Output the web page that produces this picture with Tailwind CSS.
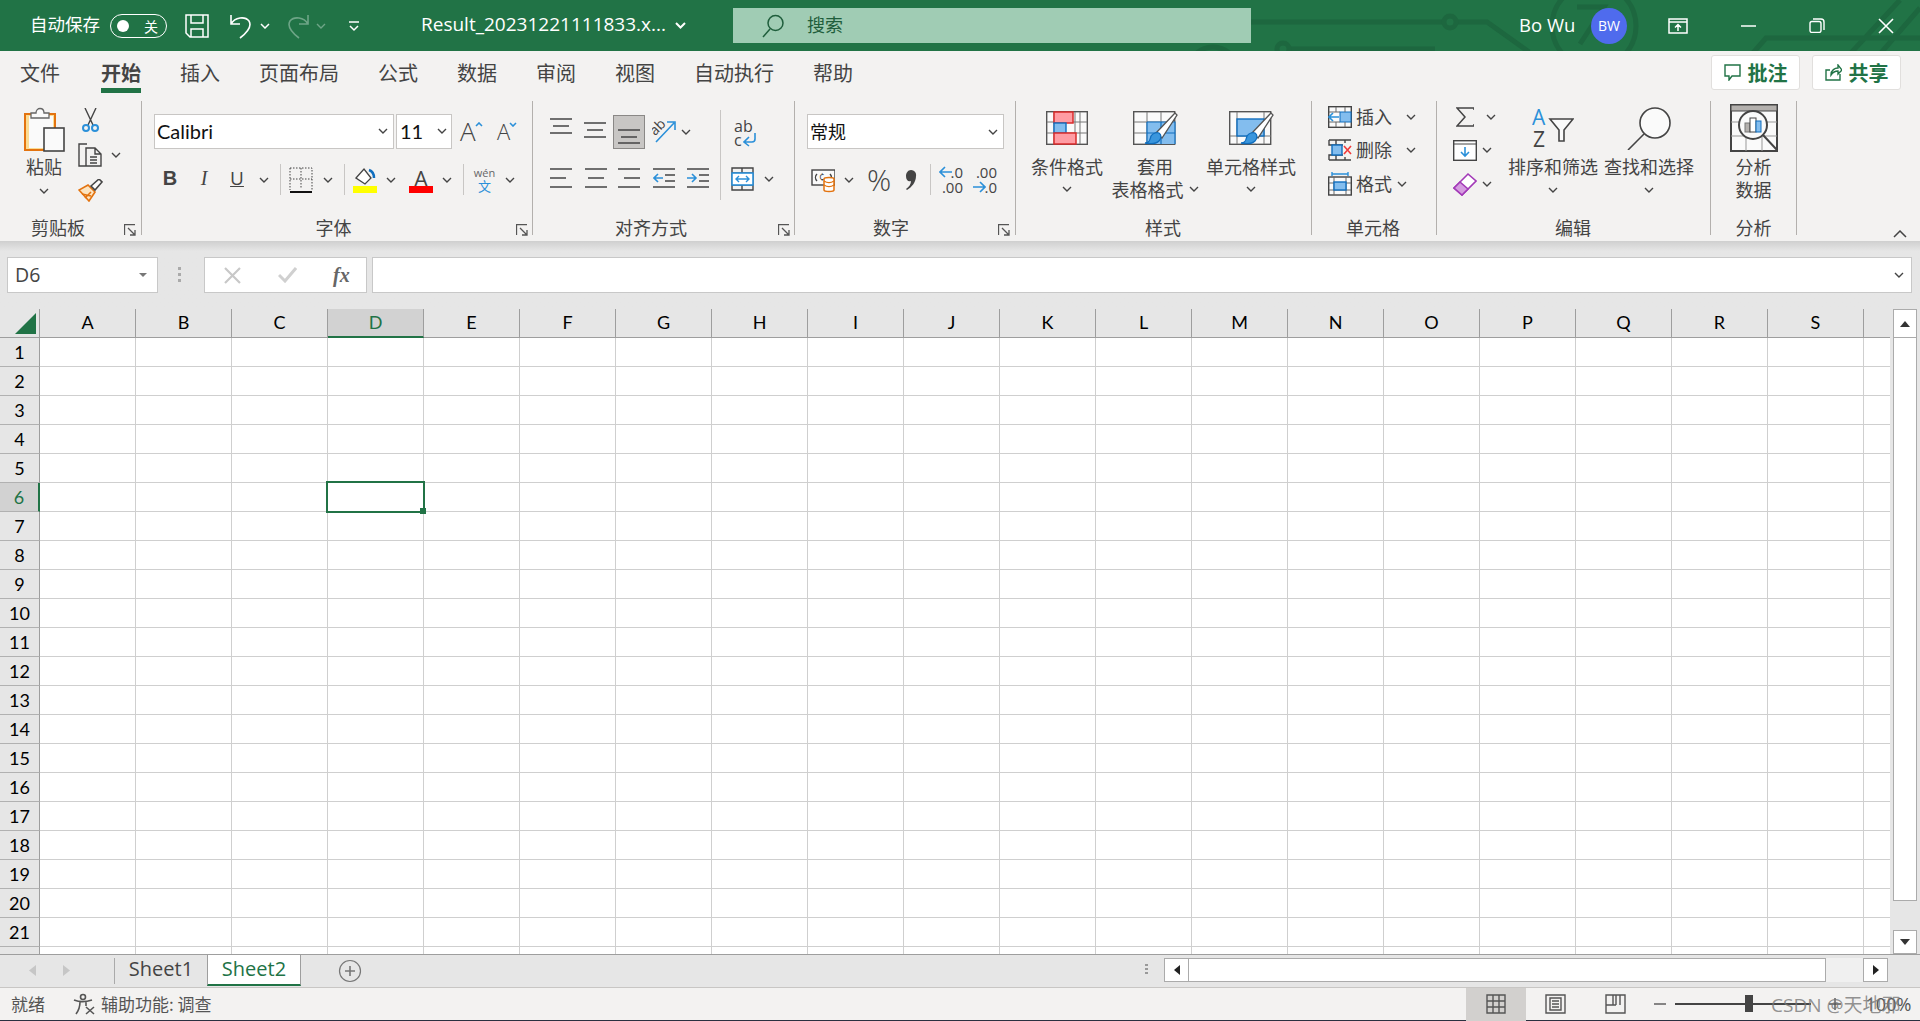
<!DOCTYPE html>
<html lang="zh-CN">
<head>
  <meta charset="UTF-8">
  <title>Excel</title>
  <script src="https://cdn.jsdelivr.net/npm/@tailwindcss/browser@4"></script>
</head>
<body class="relative w-[1920px] h-[1021px] overflow-hidden bg-[#e6e6e6] text-[#444] text-[18px] [font-family:'Noto_Sans_CJK_SC',sans-serif]">

  <svg class="hidden">
    <symbol id="chev" viewBox="0 0 10 6"><path d="M1 1l4 4 4-4" fill="none" stroke="#444" stroke-width="1.4"/></symbol>
    <symbol id="launcher" viewBox="0 0 12 12"><path d="M.5 11V.5H11M4 4l7 7M11 6v5H6" fill="none" stroke="#555" stroke-width="1.3"/></symbol>
    <symbol id="brush" viewBox="0 0 34 34"><path d="M12 22L31 2l2 2-15 23z" fill="#fff" stroke="#555" stroke-width="1.3"/><path d="M1 32c5 0 5-4 6-7 2-3 6-4 8-3 3 2 2 6 0 8-3 3-9 3-14 2z" fill="#3a96dd" stroke="#106ebe" stroke-width="1.3"/></symbol>
  </svg>

  <!-- title bar -->
  <header class="relative flex items-center h-[51px] bg-[#217346] text-white overflow-hidden">
    <svg class="absolute left-0 top-0" width="1920" height="51" fill="none" stroke="#1d673f" stroke-width="5">
      <path d="M1250 22h193M1457 22h30l42 30"/><circle cx="1450" cy="22" r="6"/>
      <circle cx="1594" cy="26" r="42"/><path d="M1577 7h27l-24 37"/>
      <circle cx="1213" cy="72" r="25"/><path d="M1289 49h146"/><circle cx="1283" cy="49" r="6"/>
      <path d="M1752 54l14-16h154M1850 54l50-54M1880 54l40-46"/>
    </svg>
    <span class="relative ml-[30px] w-[70px] pb-[2px] text-[17.5px] whitespace-nowrap">自动保存</span>
    <div class="relative ml-[10px] w-[57px] h-[24px] rounded-full border border-white flex items-center justify-between pl-[6px] pr-[8px]">
      <span class="w-[12px] h-[12px] rounded-full bg-white"></span>
      <span class="text-[14px] leading-none">关</span>
    </div>
    <svg class="relative ml-[18px]" width="24" height="24" fill="none" stroke="#fff" stroke-width="1.5"><path d="M1 1h22v22H5l-4-4zM6 1v8h12V1M6 23v-8h12v8"/></svg>
    <svg class="relative ml-[20px]" width="24" height="26" fill="none" stroke="#fff" stroke-width="1.6"><path d="M2 2v9h9M2 11c4-7 14-8 18-3 3 5 0 10-9 17"/></svg>
    <svg class="relative ml-[7px]" width="10" height="6"><path d="M1 1l4 4 4-4" fill="none" stroke="#fff" stroke-width="1.5"/></svg>
    <svg class="relative ml-[17px]" width="23" height="26" fill="none" stroke="#6ea587" stroke-width="1.6"><path d="M21 2v9h-9M21 11C17 4 7 3 3 8c-3 5 0 10 9 17"/></svg>
    <svg class="relative ml-[6px]" width="10" height="6"><path d="M1 1l4 4 4-4" fill="none" stroke="#6ea587" stroke-width="1.4"/></svg>
    <svg class="relative ml-[22px]" width="12" height="12" fill="none" stroke="#fff" stroke-width="1.5"><path d="M1 2h10M2 6l4 4 4-4"/></svg>
    <span class="relative ml-[61px] w-[244px] pb-[2px] whitespace-nowrap text-[19px] [font-family:'Open_Sans',sans-serif]">Result_20231221111833.x...</span>
    <svg class="relative ml-[10px]" width="11" height="7"><path d="M1 1l4.5 4.5L10 1" fill="none" stroke="#fff" stroke-width="2"/></svg>
    <div class="relative ml-[47px] w-[518px] h-[35px] bg-[#a0ccb4] flex items-center text-[#1f5e3c]">
      <svg class="ml-[29px]" width="22" height="24" fill="none" stroke="#1f5e3c" stroke-width="1.5"><circle cx="13.5" cy="9" r="7.5"/><path d="M8 15L1 23"/></svg>
      <span class="ml-[23px] pb-[2px]">搜索</span>
    </div>
    <span class="relative ml-[268px] w-[56px] pb-[2px] whitespace-nowrap text-[18.500px] [font-family:'Open_Sans',sans-serif]">Bo Wu</span>
    <span class="relative ml-[16px] w-[36px] h-[36px] rounded-full bg-[#4f6bed] flex items-center justify-center text-[14px] [font-family:'Open_Sans',sans-serif]">BW</span>
    <svg class="relative ml-[41px]" width="20" height="16" fill="none" stroke="#fff" stroke-width="1.5"><path d="M1 1h18v14H1zM1 4h18M10 13V7M7 9.5l3-3 3 3"/></svg>
    <svg class="relative ml-[53px]" width="15" height="2"><path d="M0 1h15" stroke="#fff" stroke-width="1.5"/></svg>
    <svg class="relative ml-[53px]" width="16" height="15" fill="none" stroke="#fff" stroke-width="1.4"><rect x="1" y="3.5" width="11" height="11" rx="2"/><path d="M4 1h8a3 3 0 0 1 3 3v8"/></svg>
    <svg class="relative ml-[53px]" width="16" height="16" stroke="#fff" stroke-width="1.6"><path d="M1 1l14 14M15 1L1 15"/></svg>
  </header>

  <!-- tabs -->
  <nav class="flex items-start h-[50px] pt-[8px] pl-[20px] gap-[39px] bg-[#f3f2f1] text-[20px] leading-[28px]">
    <span class="h-[34px]">文件</span>
    <span class="ml-[2px] h-[34px] font-bold border-b-[5px] border-[#217346]">开始</span>
    <span class="h-[34px]">插入</span>
    <span class="h-[34px]">页面布局</span>
    <span class="h-[34px]">公式</span>
    <span class="h-[34px]">数据</span>
    <span class="h-[34px]">审阅</span>
    <span class="h-[34px]">视图</span>
    <span class="h-[34px]">自动执行</span>
    <span class="h-[34px]">帮助</span>
    <div class="ml-auto flex gap-[12px] -mt-[4px] mr-[19px] font-bold text-[#217346]">
      <div class="w-[89px] h-[35px] bg-white border border-[#e1dfdd] rounded-[3px] flex items-center justify-center gap-[7px]">
        <svg width="17" height="17" fill="none" stroke="#217346" stroke-width="1.4"><path d="M1 1h15v11H8l-3 4v-4H1z"/></svg>批注
      </div>
      <div class="w-[89px] h-[35px] bg-white border border-[#e1dfdd] rounded-[3px] flex items-center justify-center gap-[7px]">
        <svg width="17" height="17" fill="none" stroke="#217346" stroke-width="1.4"><path d="M15 10v6H1V6h4M6 11c0-5 4-7 7-7V1l4 5-4 4V7c-3 0-5 1-7 4z"/></svg>共享
      </div>
    </div>
  </nav>

  <!-- ribbon -->
  <div class="relative flex h-[140px] pb-[6px] bg-[#f3f2f1]">

    <!-- clipboard -->
    <section class="relative flex flex-col w-[142px] h-[134px] border-r border-[#b3b0ad]">
      <div class="flex flex-1">
        <div class="flex flex-col items-center w-[78px] pl-[10px] pt-[6px]">
          <svg width="41" height="45"><rect x="1" y="7" width="30" height="36" fill="#fbdc94" stroke="#e3730f" stroke-width="2"/><rect x="5" y="9" width="24" height="32" fill="#fafafa"/><path d="M7 11V6h5c0-6 8-6 8 0h5v5z" fill="#fafafa" stroke="#666" stroke-width="1.3"/><rect x="20" y="21" width="20" height="23" fill="#fafafa" stroke="#444" stroke-width="1.6"/></svg>
          <span class="mt-[3px] leading-[22px]">粘贴</span>
          <svg class="mt-[11px]" width="10" height="6"><use href="#chev"/></svg>
        </div>
        <div class="flex flex-col">
          <svg class="ml-[4px] mt-[7px]" width="17" height="25" fill="none" stroke-width="1.4"><path d="M3 0l8 17M14 0L6 17" stroke="#444"/><circle cx="4" cy="20" r="3" stroke="#2b90d9" stroke-width="2"/><circle cx="13" cy="20" r="3" stroke="#2b90d9" stroke-width="2"/></svg>
          <div class="flex items-center mt-[10px]">
            <svg width="24" height="24" fill="none" stroke="#444" stroke-width="1.4"><path d="M9 23H1V1h8M8 5h9l6 6v12H8zM17 5v6h6M12 14h7M12 17h7M12 20h7"/></svg>
            <svg class="ml-[9px]" width="10" height="6"><use href="#chev"/></svg>
          </div>
          <svg class="mt-[12px]" width="25" height="23" fill="none" stroke-width="1.6"><path d="M1 11l10 11 6-9-7-7z" fill="#fce4c0" stroke="#e3730f"/><path d="M4 15l9 2M7 19l6-6" stroke="#e3730f"/><path d="M13 7l8-7 3 3-7 8z" fill="#fafafa" stroke="#444"/></svg>
        </div>
      </div>
      <div class="h-[22px] leading-[22px] -mb-[3px] pl-[31px]">剪贴板</div>
      <svg class="absolute left-[124px] top-[123px]" width="12" height="12"><use href="#launcher"/></svg>
    </section>

    <!-- font -->
    <section class="relative flex flex-col w-[391px] h-[134px] border-r border-[#b3b0ad]">
      <div class="flex items-center mt-[13px] pl-[12px] h-[35px]">
        <div class="flex items-center justify-between w-[240px] h-[35px] bg-white border border-[#c8c6c4] pl-[2px] pr-[5px] pb-[2px] text-[#111] text-[20px] [font-family:Lato,sans-serif]">Calibri<svg width="10" height="6"><use href="#chev"/></svg></div>
        <div class="flex items-center justify-between ml-[2px] w-[56px] h-[35px] bg-white border border-[#c8c6c4] pl-[3px] pr-[4px] pb-[2px] text-[#111] text-[20px] [font-family:Lato,sans-serif]">11<svg width="10" height="6"><use href="#chev"/></svg></div>
        <div class="relative ml-[8px] w-[23px] text-[26px] leading-[33px] [font-family:'Open_Sans',sans-serif] font-light">A<svg class="absolute right-0 top-[7px]" width="8" height="5"><path d="M1 4l3-3 3 3" fill="none" stroke="#2b90d9" stroke-width="1.6"/></svg></div>
        <div class="relative ml-[14px] w-[20px] text-[22px] leading-[33px] [font-family:'Open_Sans',sans-serif] font-light">A<svg class="absolute right-0 top-[7px]" width="8" height="5"><path d="M1 1l3 3 3-3" fill="none" stroke="#2b90d9" stroke-width="1.6"/></svg></div>
      </div>
      <div class="flex items-center mt-[15px] h-[31px]">
        <span class="ml-[16px] w-[24px] pb-[3px] text-center font-bold text-[20px] [font-family:'Liberation_Sans',sans-serif]">B</span>
        <span class="ml-[10px] w-[24px] pb-[3px] text-center italic text-[20px] [font-family:'Liberation_Serif',serif]">I</span>
        <span class="ml-[9px] w-[24px] pb-[3px] text-center underline text-[19px] [font-family:'Open_Sans',sans-serif]">U</span>
        <svg class="ml-[10px]" width="10" height="6"><use href="#chev"/></svg>
        <span class="ml-[11px] w-px h-[31px] bg-[#c8c6c4]"></span>
        <svg class="ml-[8px]" width="24" height="26" fill="none"><path d="M1 1h22v22M1 1v22M12 1v21M1 12h22" stroke="#444" stroke-dasharray="1.5 1.5"/><path d="M1 25h22" stroke="#111" stroke-width="2"/></svg>
        <svg class="ml-[10px]" width="10" height="6"><use href="#chev"/></svg>
        <span class="ml-[11px] w-px h-[31px] bg-[#c8c6c4]"></span>
        <svg class="ml-[8px]" width="24" height="26"><path d="M3 11l8-9 7 9-6 6z" fill="#fff" stroke="#444" stroke-width="1.3"/><path d="M16 3c3 1 5 4 5 8" fill="none" stroke="#106ebe" stroke-width="2.5"/><rect y="19" width="24" height="7" fill="#ffff00"/></svg>
        <svg class="ml-[9px]" width="10" height="6"><use href="#chev"/></svg>
        <div class="relative ml-[13px] w-[24px] h-[26px] text-center text-[22px] leading-[22px] [font-family:'Open_Sans',sans-serif]">A<span class="absolute left-0 bottom-0 w-[24px] h-[7px] bg-[#ff0000]"></span></div>
        <svg class="ml-[9px]" width="10" height="6"><use href="#chev"/></svg>
        <span class="ml-[11px] w-px h-[31px] bg-[#c8c6c4]"></span>
        <div class="ml-[10px] w-[21px] flex flex-col items-center [font-family:'Open_Sans',sans-serif]">
          <span class="text-[11px] leading-[12px] text-[#666]">wén</span>
          <span class="text-[13px] leading-[14px] text-[#2b90d9]">文</span>
        </div>
        <svg class="ml-[10px]" width="10" height="6"><use href="#chev"/></svg>
      </div>
      <div class="mt-auto h-[22px] leading-[22px] -mb-[3px] text-center pr-[7px]">字体</div>
      <svg class="absolute right-[4px] top-[123px]" width="12" height="12"><use href="#launcher"/></svg>
    </section>

    <!-- alignment -->
    <section class="relative flex flex-col w-[262px] h-[134px] border-r border-[#b3b0ad]">
      <div class="flex h-[99px]">
        <div class="w-[187px] pl-[17px] pt-[14px]">
          <div class="flex items-center h-[34px]">
            <svg width="22" height="34" stroke="#444" stroke-width="1.6"><path d="M0 4h22M3 11h16M0 18h22"/></svg>
            <svg class="ml-[12px]" width="22" height="34" stroke="#444" stroke-width="1.6"><path d="M0 8h22M3 15h16M0 22h22"/></svg>
            <div class="ml-[7px] w-[32px] h-[34px] bg-[#c8c6c4] border border-[#8a8886] flex justify-center">
              <svg width="22" height="32" stroke="#444" stroke-width="1.6"><path d="M0 14h22M3 21h16M0 27h22"/></svg>
            </div>
            <svg class="ml-[7px]" width="24" height="28" fill="none"><path d="M4 24L22 5M15 4h8v8" stroke="#2b90d9" stroke-width="1.6"/><text x="0" y="13" transform="rotate(-45 8 12)" font-size="14" fill="#444" font-family="Open Sans">ab</text></svg>
            <svg class="ml-[5px]" width="10" height="6"><use href="#chev"/></svg>
          </div>
          <div class="flex items-center mt-[11px] h-[36px]">
            <svg width="22" height="36" stroke="#444" stroke-width="1.6"><path d="M0 9h22M0 18h16M0 27h22"/></svg>
            <svg class="ml-[13px]" width="22" height="36" stroke="#444" stroke-width="1.6"><path d="M0 9h22M3 18h16M0 27h22"/></svg>
            <svg class="ml-[11px]" width="22" height="36" stroke="#444" stroke-width="1.6"><path d="M0 9h22M6 18h16M0 27h22"/></svg>
            <svg class="ml-[13px]" width="22" height="36" fill="none" stroke-width="1.6"><path d="M0 9h22M12 15h10M12 21h10M0 27h22" stroke="#444"/><path d="M10 18H1M5 14l-4 4 4 4" stroke="#2b90d9"/></svg>
            <svg class="ml-[12px]" width="22" height="36" fill="none" stroke-width="1.6"><path d="M0 9h22M12 15h10M12 21h10M0 27h22" stroke="#444"/><path d="M0 18h9M5 14l4 4-4 4" stroke="#2b90d9"/></svg>
          </div>
        </div>
        <span class="mt-[9px] w-px h-[90px] bg-[#c8c6c4]"></span>
        <div class="flex flex-col">
          <div class="relative ml-[13px] mt-[18px] w-[22px] h-[29px] text-[16px] leading-[14px] [font-family:'Open_Sans',sans-serif]">ab<br>c<svg class="absolute left-[9px] top-[14px]" width="13" height="14" fill="none" stroke="#2b90d9" stroke-width="1.6"><path d="M12 0v6a3 3 0 0 1-3 3H2M6 4L1 9l5 4"/></svg></div>
          <div class="flex items-center ml-[10px] mt-[19px]">
            <svg width="23" height="24" fill="none"><path d="M1 1h21v22H1zM1 1v5h21M1 23v-5h21M11 1v5M11 18v5" stroke="#444" stroke-width="1.4"/><rect x="1" y="6" width="21" height="12" fill="#fff" stroke="#2b90d9" stroke-width="1.6"/><path d="M5 12h13M8 9l-3 3 3 3M15 9l3 3-3 3" stroke="#2b90d9" stroke-width="1.4"/></svg>
            <svg class="ml-[10px]" width="10" height="6"><use href="#chev"/></svg>
          </div>
        </div>
      </div>
      <div class="mt-auto h-[22px] leading-[22px] -mb-[3px] pl-[82px]">对齐方式</div>
      <svg class="absolute right-[4px] top-[123px]" width="12" height="12"><use href="#launcher"/></svg>
    </section>

    <!-- number -->
    <section class="relative flex flex-col w-[221px] h-[134px] border-r border-[#b3b0ad]">
      <div class="flex items-center justify-between mt-[13px] ml-[12px] w-[197px] h-[35px] bg-white border border-[#c8c6c4] pl-[2px] pr-[5px] text-[#111]">常规<svg width="10" height="6"><use href="#chev"/></svg></div>
      <div class="flex items-center mt-[15px] h-[31px]">
        <svg class="ml-[16px]" width="24" height="26" fill="none"><rect x="1" y="3" width="23" height="15" fill="#fafafa" stroke="#444" stroke-width="1.4"/><path d="M6 7c-2 2-2 5 0 7M19 7c2 2 2 5 0 7" stroke="#444" stroke-width="1.4"/><text x="8" y="14" font-size="10" fill="#444" font-family="Open Sans">¢</text><path d="M13 12c0-2 10-2 10 0v11c0 2-10 2-10 0z" fill="#fff" stroke="#e3730f" stroke-width="1.5"/><path d="M13 14c3 2 7 2 10 0M13 18c3 2 7 2 10 0" fill="none" stroke="#e3730f" stroke-width="1.3"/></svg>
        <svg class="ml-[9px]" width="10" height="6"><use href="#chev"/></svg>
        <span class="ml-[13px] w-[24px] text-center text-[30px] leading-[31px] [font-family:'Open_Sans',sans-serif] font-light">%</span>
        <svg class="ml-[14px]" width="12" height="22"><path d="M6 1a5 5 0 0 1 5 6c0 6-4 11-9 14l-1-1c3-2 5-5 5-8-3 1-5-1-5-5 0-3 2-6 5-6z" fill="#444"/></svg>
        <span class="ml-[13px] w-px h-[31px] bg-[#c8c6c4]"></span>
        <div class="relative ml-[8px] w-[24px] h-[29px] text-[15px] leading-[14px] [font-family:'Open_Sans',sans-serif]"><span class="absolute right-0 top-0">.0</span><span class="absolute right-0 bottom-0">.00</span><svg class="absolute left-0 top-[1px]" width="13" height="12" fill="none" stroke="#2b90d9" stroke-width="1.6"><path d="M13 6H2M6 1L1 6l5 5"/></svg></div>
        <div class="relative ml-[10px] w-[24px] h-[29px] text-[15px] leading-[14px] [font-family:'Open_Sans',sans-serif]"><span class="absolute right-0 top-0">.00</span><span class="absolute right-0 bottom-0">.0</span><svg class="absolute left-0 bottom-[1px]" width="13" height="12" fill="none" stroke="#2b90d9" stroke-width="1.6"><path d="M0 6h11M7 1l5 5-5 5"/></svg></div>
      </div>
      <div class="mt-auto h-[22px] leading-[22px] -mb-[3px] pl-[78px]">数字</div>
      <svg class="absolute right-[5px] top-[123px]" width="12" height="12"><use href="#launcher"/></svg>
    </section>

    <!-- styles -->
    <section class="relative flex flex-col w-[296px] h-[134px] border-r border-[#b3b0ad]">
      <div class="flex pl-[4px] h-[100px] leading-[22px]">
        <div class="flex flex-col items-center w-[94px] pt-[10px]">
          <svg width="42" height="34"><rect x=".7" y=".7" width="40.6" height="32.6" fill="#fafafa" stroke="#555" stroke-width="1.4"/><path d="M1 11h40M1 22h40M8 1v32M29 1v32M34 1v32" stroke="#777"/><rect x="8" y="1" width="19" height="11" fill="#ff9ca3" stroke="#d92b2b" stroke-width="1.5"/><rect x="8" y="12" width="12" height="10" fill="#83bdee" stroke="#106ebe" stroke-width="1.4"/><rect x="8" y="22" width="22" height="11" fill="#ff9ca3" stroke="#d92b2b" stroke-width="1.5"/></svg>
          <span class="mt-[10px] whitespace-nowrap">条件格式</span>
          <span class="mt-[1px] h-[22px] flex items-center"><svg width="10" height="6"><use href="#chev"/></svg></span>
        </div>
        <div class="flex flex-col items-center w-[82px] pt-[10px]">
          <svg width="44" height="34" class="overflow-visible"><rect x=".7" y=".7" width="41" height="32.6" fill="#fafafa" stroke="#555" stroke-width="1.4"/><path d="M1 11h41M1 22h41M14 1v32M28 1v32" stroke="#777"/><path d="M14 11h28v22H14z" fill="#83bdee"/><path d="M14 11h28v22M14 11v22M14 22h28M28 11v22" stroke="#106ebe" stroke-width="1.2" fill="none"/><use href="#brush" x="11" y="0" width="34" height="34"/></svg>
          <span class="mt-[10px] whitespace-nowrap">套用</span>
          <span class="mt-[1px] flex items-center whitespace-nowrap">表格格式<svg class="ml-[5px]" width="10" height="6"><use href="#chev"/></svg></span>
        </div>
        <div class="flex flex-col items-center w-[110px] pt-[10px]">
          <svg class="ml-[2px] overflow-visible" width="46" height="34"><rect x=".7" y=".7" width="41" height="32.6" fill="#fafafa" stroke="#555" stroke-width="1.4"/><path d="M1 25h41M8 1v32M35 1v32" stroke="#777"/><rect x="8" y="8" width="27" height="17" fill="#83bdee" stroke="#106ebe" stroke-width="1.4"/><use href="#brush" x="11" y="0" width="34" height="34"/></svg>
          <span class="mt-[10px] whitespace-nowrap">单元格样式</span>
          <span class="mt-[1px] h-[22px] flex items-center"><svg width="10" height="6"><use href="#chev"/></svg></span>
        </div>
      </div>
      <div class="mt-auto h-[22px] leading-[22px] -mb-[3px] pl-[129px]">样式</div>
    </section>

    <!-- cells -->
    <section class="relative flex flex-col w-[125px] h-[134px] border-r border-[#b3b0ad] leading-[24px]">
      <div class="flex flex-col pl-[16px] pt-[4px] h-[100px]">
        <div class="flex items-center h-[24px]">
          <svg width="24" height="22" fill="none"><rect x=".7" y=".7" width="22.6" height="20.6" fill="#fafafa" stroke="#444" stroke-width="1.4"/><rect x="12" y="6" width="11" height="10" fill="#83bdee" stroke="#106ebe"/><path d="M1 6h11M1 16h11M8 1v5M8 16v5M17 1v5M17 16v5" stroke="#666"/><path d="M11 11H1M5 7l-4 4 4 4" stroke="#2b90d9" stroke-width="1.6"/></svg>
          <span class="ml-[4px] w-[36px] pb-[2px]">插入</span>
          <svg class="ml-[14px]" width="10" height="6"><use href="#chev"/></svg>
        </div>
        <div class="flex items-center h-[24px] mt-[9px]">
          <svg width="24" height="22" fill="none"><path d="M1 1h22M1 21h22M1 1v5h14M1 21v-5h14M8 1v5M8 16v5M17 1v3M17 18v3" stroke="#444" stroke-width="1.4"/><rect x="4" y="6" width="10" height="10" fill="#83bdee" stroke="#106ebe" stroke-width="1.4"/><path d="M16 7l7 8M23 7l-7 8" stroke="#f03a3a" stroke-width="1.6"/></svg>
          <span class="ml-[4px] w-[36px] pb-[2px]">删除</span>
          <svg class="ml-[14px]" width="10" height="6"><use href="#chev"/></svg>
        </div>
        <div class="flex items-center h-[24px] mt-[10px]">
          <svg width="24" height="24" fill="none"><rect x=".7" y="5" width="22.6" height="18" fill="#fafafa" stroke="#444" stroke-width="1.4"/><path d="M1 11h22M1 18h22M6 5v18M18 5v18" stroke="#666"/><rect x="6" y="10" width="12" height="8" fill="#83bdee" stroke="#106ebe" stroke-width="1.4"/><path d="M4 2h16M4 0v4M20 0v4" stroke="#2b90d9" stroke-width="1.4"/></svg>
          <span class="ml-[4px] w-[36px] pb-[2px]">格式</span>
          <svg class="ml-[5px]" width="10" height="6"><use href="#chev"/></svg>
        </div>
      </div>
      <div class="mt-auto h-[22px] leading-[22px] -mb-[3px] pl-[34px]">单元格</div>
    </section>

    <!-- editing -->
    <section class="relative flex flex-col w-[274px] h-[134px] border-r border-[#b3b0ad]">
      <div class="flex h-[100px] leading-[22px]">
        <div class="flex flex-col w-[68px] pt-[4px]">
          <div class="flex items-center h-[24px] pl-[19px]">
            <svg width="18" height="20" fill="none" stroke="#444" stroke-width="1.5"><path d="M18 3V1H1l8 9-8 9h17v-2"/></svg>
            <svg class="ml-[12px]" width="10" height="6"><use href="#chev"/></svg>
          </div>
          <div class="flex items-center h-[24px] mt-[9px] pl-[16px]">
            <svg width="24" height="21" fill="none"><rect x=".7" y=".7" width="22.6" height="19.6" fill="#fff" stroke="#444" stroke-width="1.4"/><path d="M1 4h22" stroke="#444"/><path d="M12 7v9M8 12l4 4 4-4" stroke="#2b90d9" stroke-width="1.6"/></svg>
            <svg class="ml-[5px]" width="10" height="6"><use href="#chev"/></svg>
          </div>
          <div class="flex items-center h-[24px] mt-[10px] pl-[16px]">
            <svg width="24" height="24" fill="none" stroke="#a33ab8" stroke-width="1.6"><path d="M1 16L15 2l8 7-14 14z" fill="#fff"/><path d="M1 16l6-6 8 7-6 6z" fill="#d59ce0"/></svg>
            <svg class="ml-[5px]" width="10" height="6"><use href="#chev"/></svg>
          </div>
        </div>
        <div class="flex flex-col items-center w-[96px] pt-[7px]">
          <svg width="42" height="40"><text x="0" y="17" font-size="21" fill="#2b90d9" font-family="Open Sans">A</text><text x="1" y="39" font-size="21" fill="#444" font-family="Open Sans">Z</text><path d="M18 11h23l-9 11v11h-5V22z" fill="#fafafa" stroke="#444" stroke-width="1.6"/></svg>
          <span class="mt-[8px] whitespace-nowrap">排序和筛选</span>
          <span class="mt-[2px] h-[22px] flex items-center"><svg width="10" height="6"><use href="#chev"/></svg></span>
        </div>
        <div class="flex flex-col items-center w-[96px] pt-[6px]">
          <svg width="44" height="44" fill="none" stroke="#444" stroke-width="1.6"><circle cx="28" cy="16" r="15" fill="#fafafa"/><path d="M17 27L1 43"/></svg>
          <span class="mt-[5px] whitespace-nowrap">查找和选择</span>
          <span class="mt-[2px] h-[22px] flex items-center"><svg width="10" height="6"><use href="#chev"/></svg></span>
        </div>
      </div>
      <div class="mt-auto h-[22px] leading-[22px] -mb-[3px] pl-[118px]">编辑</div>
    </section>

    <!-- analysis -->
    <section class="relative flex flex-col items-center w-[86px] h-[134px] border-r border-[#b3b0ad] leading-[22px]">
      <svg class="mt-[3px]" width="48" height="48" fill="none"><rect x="1" y="1" width="46" height="46" fill="#fafafa" stroke="#444" stroke-width="2"/><rect x="1" y="1" width="46" height="6" fill="#b3b0ad" stroke="#444"/><path d="M1 18h46M1 32h46M16 32v15M32 32v15" stroke="#999"/><circle cx="23" cy="21" r="14" fill="#fafafa" stroke="#444" stroke-width="2"/><path d="M33 31l14 15" stroke="#444" stroke-width="2"/><rect x="15" y="19" width="5" height="9" fill="#b3b0ad" stroke="#777"/><rect x="20" y="14" width="6" height="14" fill="#fff" stroke="#444"/><rect x="26" y="17" width="5" height="11" fill="#83bdee" stroke="#106ebe"/></svg>
      <span class="mt-[3px]">分析</span>
      <span class="mt-[1px]">数据</span>
      <div class="mt-auto h-[22px] leading-[22px] -mb-[3px]">分析</div>
    </section>

    <svg class="absolute left-[1893px] top-[129px]" width="14" height="8"><path d="M1 7l6-6 6 6" fill="none" stroke="#444" stroke-width="1.5"/></svg>
  </div>

  <!-- formula bar -->
  <div class="flex items-start h-[68px] pt-[16px] pl-[7px] bg-gradient-to-b from-[#cfcfcf] to-[#e6e6e6] to-[10px] bg-no-repeat">
    <div class="flex items-center justify-between w-[151px] h-[36px] bg-white border border-[#c8c8c8] pl-[7px] pr-[10px] text-[19.500px] [font-family:'Open_Sans',sans-serif]">D6<svg width="8" height="4"><path d="M0 0h8L4 4z" fill="#777"/></svg></div>
    <div class="flex flex-col gap-[3px] mt-[10px] ml-[20px] w-[3px]"><span class="h-[3px] bg-[#aaa]"></span><span class="h-[3px] bg-[#aaa]"></span><span class="h-[3px] bg-[#aaa]"></span></div>
    <div class="relative flex items-center ml-[23px] w-[163px] h-[36px] bg-white border border-[#c8c8c8]">
      <svg class="ml-[19px]" width="17" height="17" stroke="#c8c8c8" stroke-width="2.2"><path d="M1 1l15 15M16 1L1 16"/></svg>
      <svg class="ml-[37px]" width="19" height="16" fill="none" stroke="#d0d0d0" stroke-width="3"><path d="M1 8l6 6L18 1"/></svg>
      <span class="ml-[36px] text-[20px] italic font-bold text-[#666] [font-family:'Liberation_Serif',serif]">fx</span>
    </div>
    <div class="flex items-center justify-end ml-[5px] w-[1540px] h-[36px] bg-white border border-[#c8c8c8] pr-[7px]"><svg width="10" height="6"><use href="#chev"/></svg></div>
  </div>

  <!-- sheet -->
  <div class="flex h-[645px]">
    <div id="sheet" class="relative w-[1890px] h-[645px] overflow-hidden bg-white [font-family:Lato,sans-serif] text-black">
      <div id="colHeader" class="flex h-[29px]">
        <div class="relative shrink-0 w-[40px] h-[29px] bg-[#e6e6e6] border-r border-b border-[#9e9e9e]">
          <svg class="absolute left-[15px] top-[4px]" width="21" height="21"><path d="M21 0v21H0z" fill="#217346"/></svg>
        </div>
      </div>
      <div id="rows"></div>
      <div class="absolute left-[326px] top-[172px] w-[99px] h-[32px] border-[2px] border-[#217346]">
        <span class="absolute -right-[3px] -bottom-[3px] w-[6px] h-[6px] bg-[#217346]"></span>
      </div>
    </div>
    <div class="flex flex-col items-center w-[30px] pl-[2px] pr-[2px]">
      <div class="flex items-center justify-center w-[24px] h-[29px] bg-white border border-[#ababab]"><svg width="10" height="6"><path d="M5 0l5 6H0z" fill="#333"/></svg></div>
      <div class="w-[24px] h-[563px] bg-white border-x border-b border-[#ababab]"></div>
      <div class="flex-1 w-[24px]"></div>
      <div class="flex items-center justify-center w-[24px] h-[24px] bg-white border border-[#ababab]"><svg width="10" height="6"><path d="M0 0h10L5 6z" fill="#333"/></svg></div>
    </div>
  </div>

  <!-- sheet tabs -->
  <div class="flex items-start h-[33px] bg-[#e6e6e6] border-t border-[#9e9e9e] [font-family:'Open_Sans',sans-serif]">
    <svg class="ml-[29px] mt-[10px]" width="7" height="11"><path d="M7 0v11L0 5.500z" fill="#c6c6c6"/></svg>
    <svg class="ml-[27px] mt-[10px]" width="7" height="11"><path d="M0 0v11l7-5.500z" fill="#c6c6c6"/></svg>
    <span class="ml-[44px] mt-[3px] w-px h-[26px] bg-[#aaa]"></span>
    <span class="flex justify-center w-[92px] h-[31px] text-[20px] leading-[27px]">Sheet1</span>
    <span class="flex justify-center w-[94px] h-[31px] bg-white border-x border-[#9e9e9e] border-b-2 border-b-[#217346] text-[20px] leading-[27px] text-[#217346]">Sheet2</span>
    <svg class="ml-[37px] mt-[4px]" width="24" height="24" fill="none" stroke="#777"><circle cx="12" cy="12" r="10.500" stroke-width="1.2"/><path d="M7 12h10M12 7v10" stroke-width="1.6"/></svg>
    <div class="flex flex-col gap-[2px] mt-[9px] ml-[783px] w-[3px]"><span class="h-[2px] bg-[#999]"></span><span class="h-[2px] bg-[#999]"></span><span class="h-[2px] bg-[#999]"></span></div>
    <div class="flex items-center justify-center ml-[16px] mt-[3px] w-[25px] h-[24px] bg-white border border-[#ababab]"><svg width="6" height="10"><path d="M6 0v10L0 5z" fill="#222"/></svg></div>
    <div class="w-[637px] h-[24px] mt-[3px] bg-white border-y border-r border-[#ababab]"></div>
    <div class="w-[37px] h-[24px] mt-[3px] bg-[#f0f0f0]"></div>
    <div class="flex items-center justify-center mt-[3px] w-[25px] h-[24px] bg-white border border-[#ababab]"><svg width="6" height="10"><path d="M0 0v10l6-5z" fill="#222"/></svg></div>
  </div>

  <!-- status bar -->
  <footer class="relative flex items-center h-[34px] bg-[#f3f2f1] border-t border-[#c8c6c4] border-b border-b-[#2a3040] text-[#555] text-[17px]">
    <span class="ml-[11px]">就绪</span>
    <svg class="ml-[28px]" width="22" height="22" fill="none" stroke="#555" stroke-width="1.6"><circle cx="10" cy="4" r="2.500"/><path d="M1 7c5 2 12 2 18 0M7 9c0 5-1 8-4 12M13 9v4M13 14l8 7M21 14l-8 7"/></svg>
    <span class="ml-[6px] whitespace-nowrap">辅助功能: 调查</span>
    <div class="flex items-center justify-center ml-[1254px] w-[60px] h-[33px] bg-[#d2d0ce]">
      <svg width="20" height="20" fill="none" stroke="#555" stroke-width="1.4"><path d="M1 1h18v18H1zM7 1v18M13 1v18M1 7h18M1 13h18"/></svg>
    </div>
    <svg class="ml-[19px]" width="21" height="20" fill="none" stroke="#555" stroke-width="1.4"><path d="M1 1h19v18H1zM5 4h11v12H5zM7 7h7M7 10h7M7 13h7"/></svg>
    <svg class="ml-[39px]" width="21" height="20" fill="none" stroke="#555" stroke-width="1.4"><path d="M1 1h19v18H1zM1 11h10M11 1v10M8 1v10M15 1v10"/></svg>
    <svg class="ml-[28px]" width="12" height="2"><path d="M0 1h12" stroke="#555" stroke-width="1.4"/></svg>
    <div class="relative ml-[9px] w-[136px] h-[2px] bg-[#444]"><span class="absolute left-[70px] -top-[8px] w-[8px] h-[17px] bg-[#444]"></span></div>
    <svg class="ml-[18px]" width="12" height="12"><path d="M0 6h12M6 0v12" stroke="#555" stroke-width="1.4"/></svg>
    <span class="ml-[25px] whitespace-nowrap text-[18px] [font-family:'Open_Sans',sans-serif]">100%</span>
    <span class="absolute left-[1771px] top-[5px] whitespace-nowrap text-[19px] leading-[24px] text-[#777]/80 [font-family:'Open_Sans','Noto_Sans_CJK_SC',sans-serif]">CSDN @天地邪</span>
  </footer>

  <script>
    const letters = 'ABCDEFGHIJKLMNOPQRST'.split('');
    const colHeader = document.getElementById('colHeader');
    letters.forEach(function (l) {
      const el = document.createElement('div');
      el.className = l === 'D'
        ? 'shrink-0 w-[96px] h-[29px] text-center leading-[27px] bg-[#d2d2d2] border-r border-[#9e9e9e] border-b-2 border-b-[#217346] text-[#217346]'
        : 'shrink-0 w-[96px] h-[29px] text-center leading-[27px] bg-[#e6e6e6] border-r border-b border-[#9e9e9e]';
      el.textContent = l;
      colHeader.appendChild(el);
    });

    const rows = document.getElementById('rows');
    for (let r = 1; r <= 22; r++) {
      const row = document.createElement('div');
      row.className = 'flex h-[29px]';
      const head = document.createElement('div');
      head.className = r === 6
        ? 'shrink-0 w-[40px] h-[29px] text-center leading-[28px] bg-[#d2d2d2] border-r-2 border-[#217346] border-b border-b-[#b1b1b1] text-[#217346]'
        : 'shrink-0 w-[40px] h-[29px] text-center leading-[28px] bg-[#e6e6e6] border-r border-r-[#9e9e9e] border-b border-b-[#b1b1b1]';
      head.textContent = r;
      row.appendChild(head);
      letters.forEach(function () {
        const cell = document.createElement('div');
        cell.className = 'shrink-0 w-[96px] h-[29px] border-r border-b border-[#cfcfcf]';
        row.appendChild(cell);
      });
      rows.appendChild(row);
    }
  </script>
</body>
</html>
